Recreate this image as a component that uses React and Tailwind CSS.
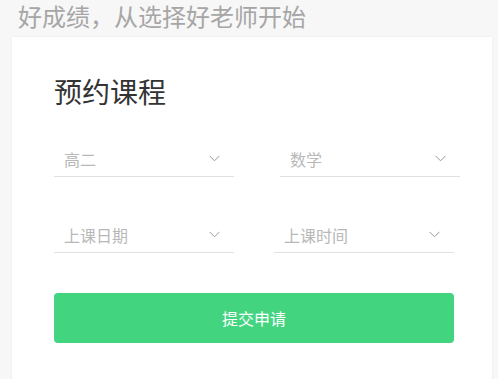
import React from 'react';

const Chevron = () => (
  <svg width="11" height="7" viewBox="0 0 11 7" fill="none" className="shrink-0">
    <path d="M0.5 0.8 L5.5 5.8 L10.5 0.8" stroke="#9a9a9a" strokeWidth="1" />
  </svg>
);

const Select = ({ label }) => (
  <div className="flex w-[180px] h-[40px] items-center justify-between border-b border-[#e0e0e0] pt-[4px] pl-[10px] pr-[14px]">
    <span className="text-[16px] text-[#b8b8b8]">{label}</span>
    <Chevron />
  </div>
);

const App = () => {
  return (
    <div
      className="h-[379px] w-[498px] overflow-hidden bg-[#f7f7f7] pl-[12px]"
      style={{ fontFamily: '"Microsoft YaHei", "Noto Sans CJK SC", sans-serif' }}
    >
      <h1 className="pl-[6px] text-[24px] leading-[32px] text-[#a6a6a6] font-normal">
        好成绩，从选择好老师开始
      </h1>

      <div className="mt-[5px] w-[480px] h-[400px] bg-white shadow-[0_0_3px_rgba(0,0,0,0.06)] pl-[42px] pt-[34px]">
        <h2 className="text-[28px] leading-[40px] text-[#333] font-normal">预约课程</h2>

        <div className="mt-[26px] flex gap-[46px]">
          <Select label="高二" />
          <Select label="数学" />
        </div>
        <div className="mt-[36px] flex gap-[40px]">
          <Select label="上课日期" />
          <Select label="上课时间" />
        </div>

        <button className="mt-[40px] flex h-[50px] w-[400px] items-center justify-center rounded-[4px] bg-[#42d47f] text-[16px] text-white">
          提交申请
        </button>
      </div>
    </div>
  );
};

export default App;
